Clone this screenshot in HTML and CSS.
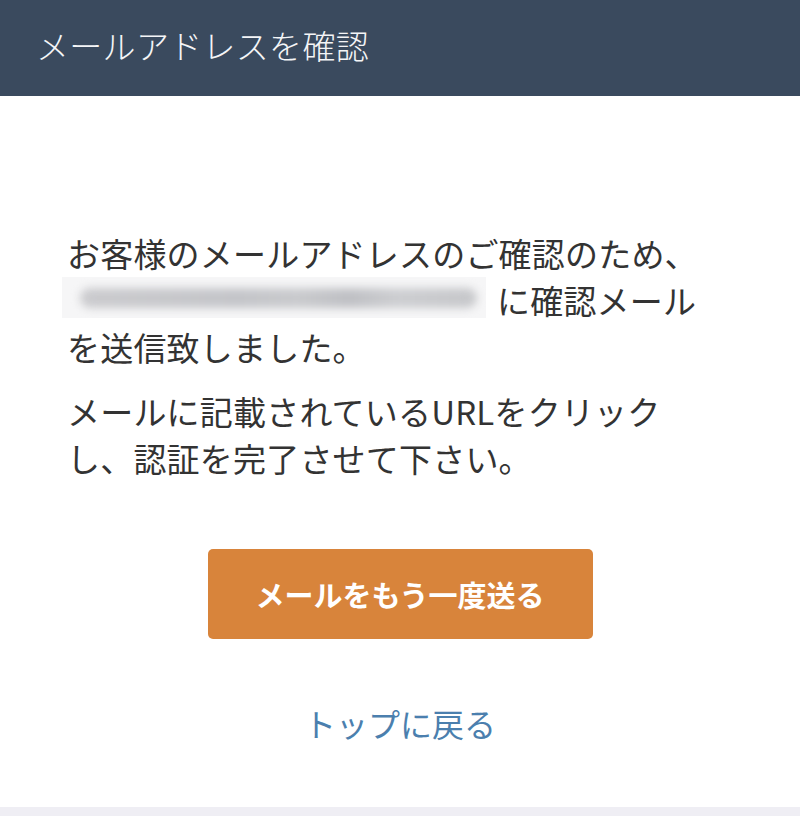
FILE: index.html
```html
<!DOCTYPE html>
<html lang="ja">

<head>
    <meta charset="UTF-8">
    <meta name="viewport" content="width=device-width, initial-scale=1.0">
    <title>メールアドレスを確認</title>
    <link rel="stylesheet" href="styles.css">
</head>

<body>
    <header class="page-header">
        <h1>メールアドレスを確認</h1>
    </header>

    <main class="content">
        <p class="message">
            お客様のメールアドレスのご確認のため、<br>
            <span class="email-mask"><span class="email-blur"></span></span>に確認メール<br>
            を送信致しました。
        </p>
        <p class="message">
            メールに記載されているURLをクリック<br>
            し、認証を完了させて下さい。
        </p>

        <div class="actions">
            <button id="resend" class="btn-resend">メールをもう一度送る</button>
            <a href="#" class="back-link">トップに戻る</a>
        </div>
    </main>

    <div class="page-bottom"></div>
</body>

</html>
```

FILE: styles.css
```css
body {
    margin: 0;
    font-family: "Noto Sans CJK JP", "Noto Sans", sans-serif;
    background-color: #efeef4;
    color: #333;
}

.page-header {
    height: 96px;
    background-color: #3a4a5e;
    display: flex;
    align-items: center;
    padding: 0 36px;
}

.page-header h1 {
    margin: 0 0 6px;
    font-size: 33px;
    font-weight: 300;
    color: #f4f5f7;
    letter-spacing: 0.3px;
}

.content {
    background-color: #fff;
    padding: 134px 67px 60px;
}

.message {
    margin: 0 0 17px;
    font-size: 33px;
    line-height: 47px;
    letter-spacing: 0.2px;
    color: #333;
}

/* blurred address, as in the original capture */
.email-mask {
    display: inline-block;
    vertical-align: top;
    width: 424px;
    height: 41px;
    margin-left: -5px;
    margin-right: 11px;
    background-color: #f6f6f7;
    position: relative;
    overflow: hidden;
}

.email-blur {
    position: absolute;
    left: 18px;
    right: 9px;
    top: 11px;
    height: 20px;
    background: linear-gradient(90deg, #cbcbce 0%, #c4c5c9 40%, #c9cacd 55%, #bfc0c4 68%, #cdced1 80%, #c6c7ca 100%);
    border-radius: 10px;
    filter: blur(4px);
}

.actions {
    display: flex;
    flex-direction: column;
    align-items: center;
    margin-top: 67px;
}

.btn-resend {
    width: 385px;
    height: 90px;
    border: none;
    border-radius: 5px;
    background-color: #d8843b;
    color: #fff;
    font-family: inherit;
    font-size: 29px;
    font-weight: bold;
    cursor: pointer;
}

.back-link {
    margin-top: 61px;
    font-size: 32px;
    line-height: 47px;
    color: #4b7fae;
    text-decoration: none;
}
```
